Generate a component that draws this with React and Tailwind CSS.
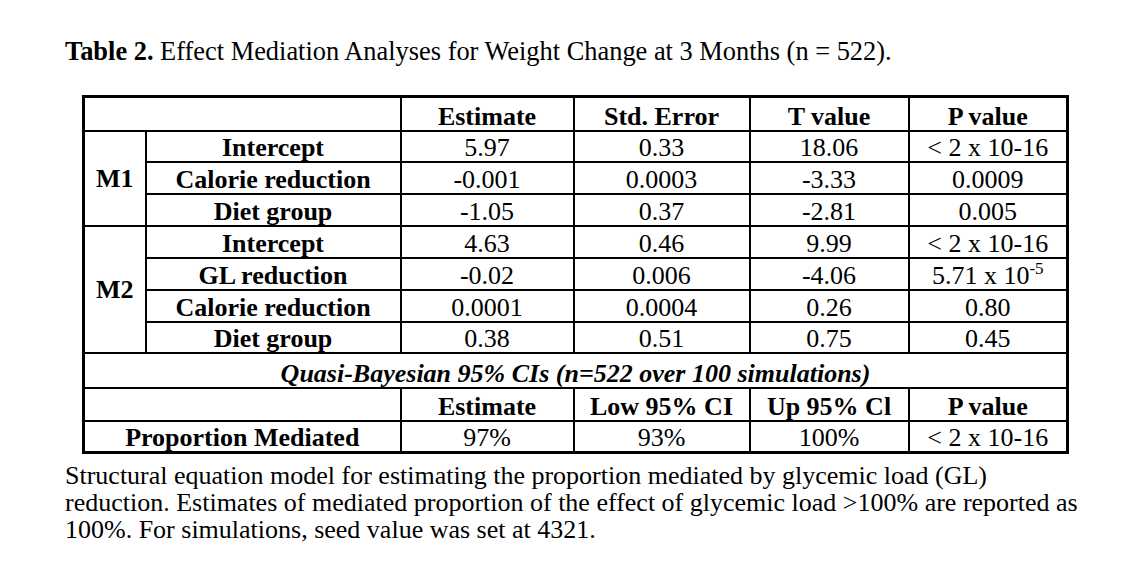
export default function App() {
  const font = { fontFamily: '"Liberation Serif", "Times New Roman", serif' };
  const td = "border-2 border-black p-0 text-center align-bottom leading-[26px] whitespace-nowrap";
  const rows1 = [
    ["Intercept", "5.97", "0.33", "18.06", "< 2 x 10-16"],
    ["Calorie reduction", "-0.001", "0.0003", "-3.33", "0.0009"],
    ["Diet group", "-1.05", "0.37", "-2.81", "0.005"],
  ];
  const rows2 = [
    ["Intercept", "4.63", "0.46", "9.99", "< 2 x 10-16"],
    ["GL reduction", "-0.02", "0.006", "-4.06", "sup"],
    ["Calorie reduction", "0.0001", "0.0004", "0.26", "0.80"],
    ["Diet group", "0.38", "0.51", "0.75", "0.45"],
  ];
  const h1 = ["h-[31px]", "h-[32px]", "h-[32px]"];
  const h2 = ["h-[32px]", "h-[32px]", "h-[32px]", "h-[31px]"];
  const pv = (v) =>
    v === "sup" ? (
      <span>
        5.71 x 10<sup className="text-[17px] relative top-[-10px]">-5</sup>
      </span>
    ) : (
      v
    );
  return (
    <div className="min-h-[564px] w-[1142px] bg-white text-black text-[26px] pl-[65px] pt-[36px]" style={font}>
      <div className="leading-[30px] whitespace-nowrap text-[26.4px]">
        <span className="font-bold">Table 2.</span> Effect Mediation Analyses for Weight Change at 3 Months (n = 522).
      </div>
      <table className="mt-[29px] ml-[17px] w-[984px] table-fixed border-collapse border-[3px] border-black">
        <colgroup>
          <col className="w-[62px]" />
          <col className="w-[255px]" />
          <col className="w-[173px]" />
          <col className="w-[176px]" />
          <col className="w-[159px]" />
          <col className="w-[159px]" />
        </colgroup>
        <tbody>
          <tr className="h-[34px]">
            <td className={td} colSpan={2}></td>
            <td className={td + " font-bold"}>Estimate</td>
            <td className={td + " font-bold"}>Std. Error</td>
            <td className={td + " font-bold"}>T value</td>
            <td className={td + " font-bold"}>P value</td>
          </tr>
          {rows1.map((r, i) => (
            <tr key={"a" + i} className={h1[i]}>
              {i === 0 && (
                <td className="border-2 border-black p-0 text-center align-middle font-bold" rowSpan={3}>
                  M1
                </td>
              )}
              <td className={td + " font-bold"}>{r[0]}</td>
              <td className={td}>{r[1]}</td>
              <td className={td}>{r[2]}</td>
              <td className={td}>{r[3]}</td>
              <td className={td}>{pv(r[4])}</td>
            </tr>
          ))}
          {rows2.map((r, i) => (
            <tr key={"b" + i} className={h2[i]}>
              {i === 0 && (
                <td className="border-2 border-black p-0 text-center align-middle font-bold" rowSpan={4}>
                  M2
                </td>
              )}
              <td className={td + " font-bold"}>{r[0]}</td>
              <td className={td}>{r[1]}</td>
              <td className={td}>{r[2]}</td>
              <td className={td}>{r[3]}</td>
              <td className={td}>{pv(r[4])}</td>
            </tr>
          ))}
          <tr className="h-[35px]">
            <td className={td + " font-bold italic"} colSpan={6}>
              Quasi-Bayesian 95% CIs (n=522 over 100 simulations)
            </td>
          </tr>
          <tr className="h-[33px]">
            <td className={td} colSpan={2}></td>
            <td className={td + " font-bold"}>Estimate</td>
            <td className={td + " font-bold"}>Low 95% CI</td>
            <td className={td + " font-bold"}>Up 95% Cl</td>
            <td className={td + " font-bold"}>P value</td>
          </tr>
          <tr className="h-[32px]">
            <td className={td + " font-bold"} colSpan={2}>Proportion Mediated</td>
            <td className={td}>97%</td>
            <td className={td}>93%</td>
            <td className={td}>100%</td>
            <td className={td}>&lt; 2 x 10-16</td>
          </tr>
        </tbody>
      </table>
      <div className="mt-[8px] leading-[27px] whitespace-nowrap">
        <div>Structural equation model for estimating the proportion mediated by glycemic load (GL)</div>
        <div>reduction. Estimates of mediated proportion of the effect of glycemic load &gt;100% are reported as</div>
        <div>100%. For simulations, seed value was set at 4321.</div>
      </div>
    </div>
  );
}
